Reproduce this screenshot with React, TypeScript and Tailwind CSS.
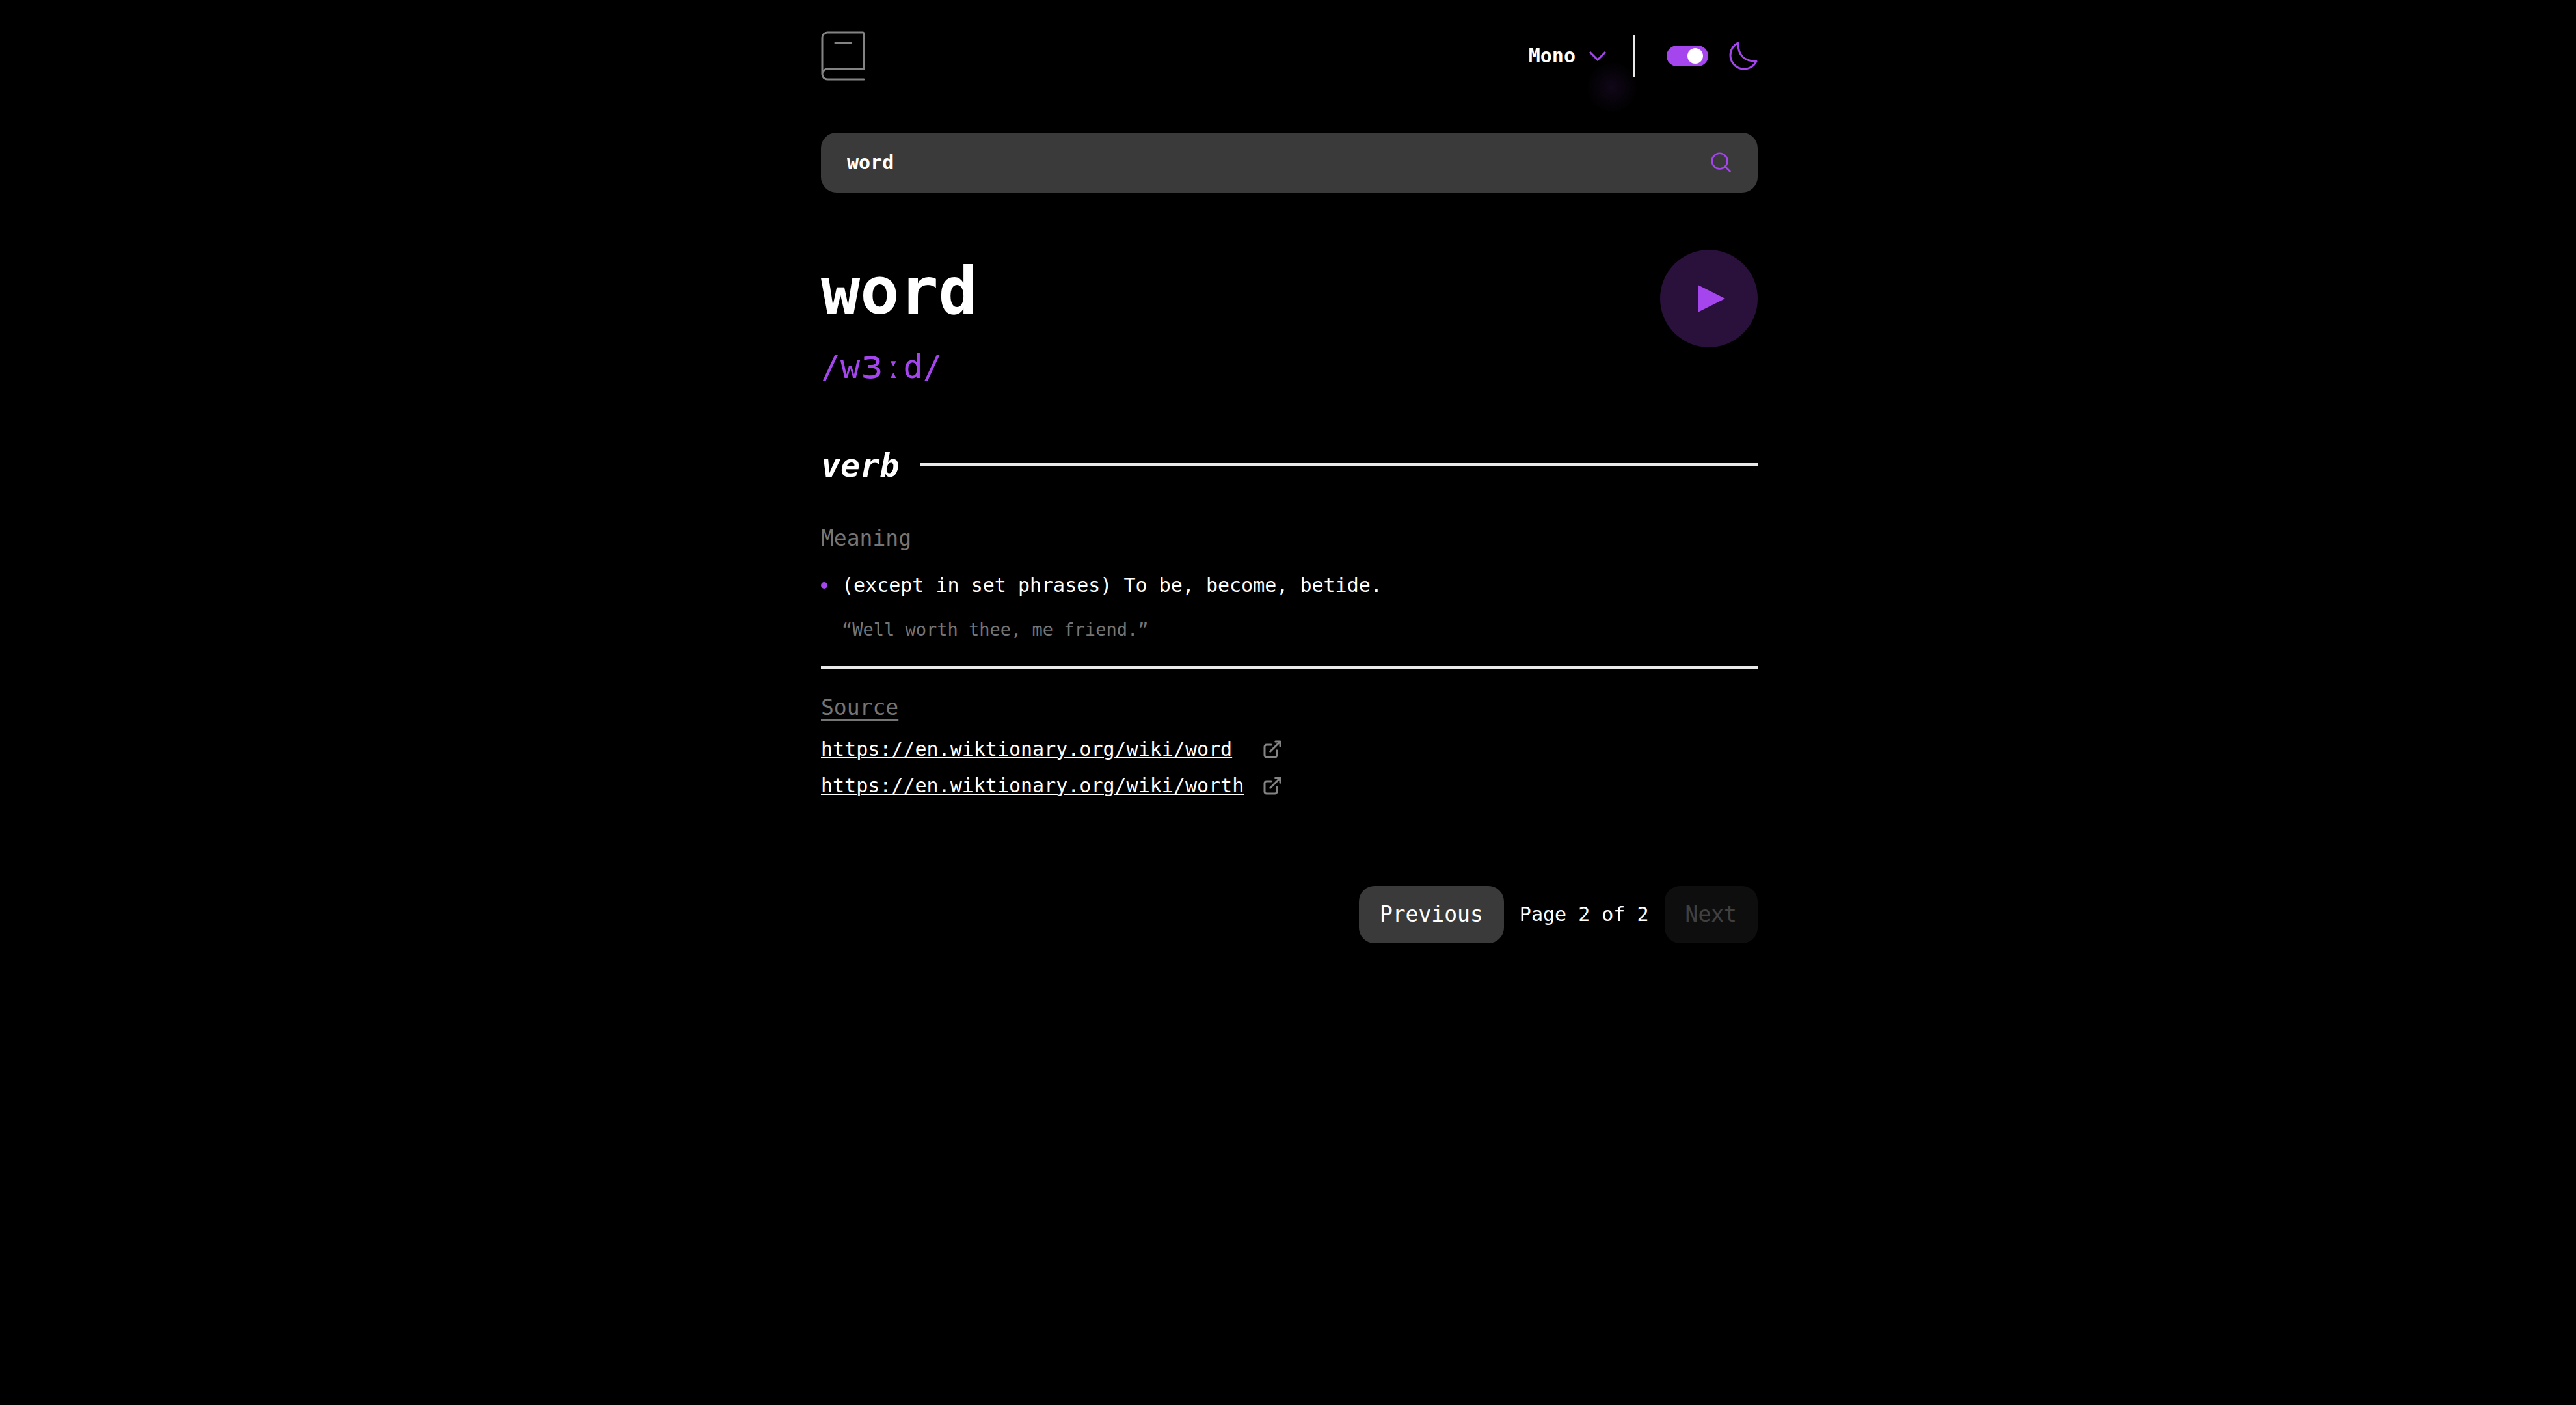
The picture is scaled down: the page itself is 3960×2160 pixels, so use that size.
import { useState } from "react";

const SOURCES = [
  "https://en.wiktionary.org/wiki/word",
  "https://en.wiktionary.org/wiki/worth",
];

function BookIcon() {
  return (
    <svg viewBox="0 0 34 38" className="h-19 w-17" fill="none" stroke="#838383" strokeWidth="1.5" strokeLinecap="round" aria-hidden="true">
      <path d="M33 37H5a4 4 0 0 1-4-4V5a4 4 0 0 1 4-4h27a1 1 0 0 1 1 1v27H5a4 4 0 0 0-4 4M11 9h12.3" />
    </svg>
  );
}

function ChevronIcon() {
  return (
    <svg viewBox="0 0 14 8" className="h-4 w-7" fill="none" stroke="#A445ED" strokeWidth="1.5" aria-hidden="true">
      <path d="m1 1 6 6 6-6" />
    </svg>
  );
}

function MoonIcon() {
  return (
    <svg viewBox="0 0 22 22" className="size-11" fill="none" stroke="#A445ED" strokeWidth="1.5" strokeLinecap="round" strokeLinejoin="round" aria-hidden="true">
      <path d="M1 10.449a10.544 10.544 0 0 0 19.993 4.686C11.544 15.135 6.858 10.448 6.858 1A10.545 10.545 0 0 0 1 10.449Z" />
    </svg>
  );
}

function SearchIcon() {
  return (
    <svg viewBox="0 0 18 18" className="size-8" fill="none" stroke="#A445ED" strokeWidth="1.5" strokeLinecap="round" strokeLinejoin="round" aria-hidden="true">
      <path d="m12.663 12.663 3.887 3.887M1 7.664a6.665 6.665 0 1 0 13.33 0 6.665 6.665 0 0 0-13.33 0Z" />
    </svg>
  );
}

function PlayIcon() {
  return (
    <svg viewBox="0 0 75 75" className="size-[150px]" fill="#A445ED" aria-hidden="true">
      <circle cx="37.5" cy="37.5" r="37.5" opacity=".25" />
      <path d="M29 27v21l21-10.5z" />
    </svg>
  );
}

function NewWindowIcon() {
  return (
    <svg viewBox="0 0 14 14" className="size-7" fill="none" stroke="#838383" strokeWidth="1.5" strokeLinecap="round" strokeLinejoin="round" aria-hidden="true">
      <path d="M6.09 3.545H2.456A1.455 1.455 0 0 0 1 5v6.545A1.455 1.455 0 0 0 2.455 13H9a1.455 1.455 0 0 0 1.455-1.455V7.91m-5.091.727L13 1m0 0H9.364M13 1v3.636" />
    </svg>
  );
}

function Header() {
  const [dark, setDark] = useState(true);
  return (
    <header className="flex items-center justify-between">
      <a href="#" aria-label="Dictionary home">
        <BookIcon />
      </a>
      <div className="flex items-center">
        <div className="relative">
          <button type="button" className="flex items-center gap-5 text-[30px] leading-12 font-bold">
            Mono
            <ChevronIcon />
          </button>
          <div className="pointer-events-none absolute top-full -right-12 size-20 -translate-y-4 rounded-full bg-[radial-gradient(closest-side,#a445ed1a,#a445ed0d_50%,transparent)]" />
        </div>
        <div className="ml-10 h-16 w-1 bg-[#e9e9e9]" />
        <label className="ml-12 flex items-center gap-8">
          <input
            type="checkbox"
            aria-label="Dark mode"
            checked={dark}
            onChange={(e) => setDark(e.target.checked)}
            className="flex h-8 w-16 appearance-none items-center justify-start rounded-full bg-[#757575] px-2 before:size-6 before:rounded-full before:bg-white checked:justify-end checked:bg-[#a445ed]"
          />
          <MoonIcon />
        </label>
      </div>
    </header>
  );
}

function SearchBar() {
  const [term, setTerm] = useState("word");
  return (
    <form className="mt-20 flex h-23 items-center rounded-3xl bg-[#3a3a3a] px-10" onSubmit={(e) => e.preventDefault()}>
      <input
        type="text"
        aria-label="Search for a word"
        value={term}
        onChange={(e) => setTerm(e.target.value)}
        className="min-w-0 flex-1 bg-transparent text-[30px] leading-12 font-bold outline-none"
      />
      <button type="submit" aria-label="Search">
        <SearchIcon />
      </button>
    </form>
  );
}

export default function App() {
  return (
    <div className="min-h-screen bg-black pl-1 font-['DejaVu_Sans_Mono',monospace] text-white">
      <div className="mx-auto max-w-[1440px] pt-12">
        <Header />
        <SearchBar />

        <main>
          <section className="mt-22 flex items-start justify-between">
            <div className="pt-1">
              <h1 className="text-[100px] leading-[120px] font-bold">word</h1>
              <p className="mt-5 text-[50px] leading-[72px] text-[#a445ed]">
                /w<span className="text-[60px] leading-none">ɜ</span>ːd/
              </p>
            </div>
            <button type="button" aria-label="Play pronunciation">
              <PlayIcon />
            </button>
          </section>

          <section className="mt-19">
            <div className="flex items-center gap-8">
              <h2 className="pt-1 text-[50px] leading-[72px] font-bold italic">verb</h2>
              <div className="h-1 flex-1 bg-[#e9e9e9]" />
            </div>
            <h3 className="mt-12 text-[33px] leading-14 text-[#757575]">Meaning</h3>
            <ul className="mt-5">
              <li className="grid grid-cols-[auto_1fr] items-center gap-x-5.5 gap-y-5">
                <span className="size-2.5 rounded-full bg-[#a445ed]" />
                <p className="text-[30px] leading-12">(except in set phrases) To be, become, betide.</p>
                <p className="col-start-2 text-[27px] leading-12 text-[#757575]">“Well worth thee, me friend.”</p>
              </li>
            </ul>
          </section>

          <section className="mt-8 border-t-4 border-[#e9e9e9] pt-8">
            <h3 className="text-[33px] leading-14 text-[#757575] underline decoration-4 underline-offset-[6px]">Source</h3>
            <ul className="mt-3 grid w-fit gap-2">
              {SOURCES.map((url) => (
                <li key={url}>
                  <a href={url} className="flex items-center justify-between gap-7.5 text-[30px] leading-12">
                    <span className="underline decoration-2 underline-offset-2">{url}</span>
                    <NewWindowIcon />
                  </a>
                </li>
              ))}
            </ul>
          </section>
        </main>

        <nav aria-label="Pagination" className="mt-[130px] flex items-center justify-end gap-6 text-[33px] leading-12">
          <button type="button" className="h-22 rounded-3xl bg-[#3a3a3a] px-8">Previous</button>
          <span className="text-[30px]">Page 2 of 2</span>
          <button type="button" disabled className="h-22 rounded-3xl bg-[#3a3a3a] px-8 opacity-25">Next</button>
        </nav>
      </div>
    </div>
  );
}
